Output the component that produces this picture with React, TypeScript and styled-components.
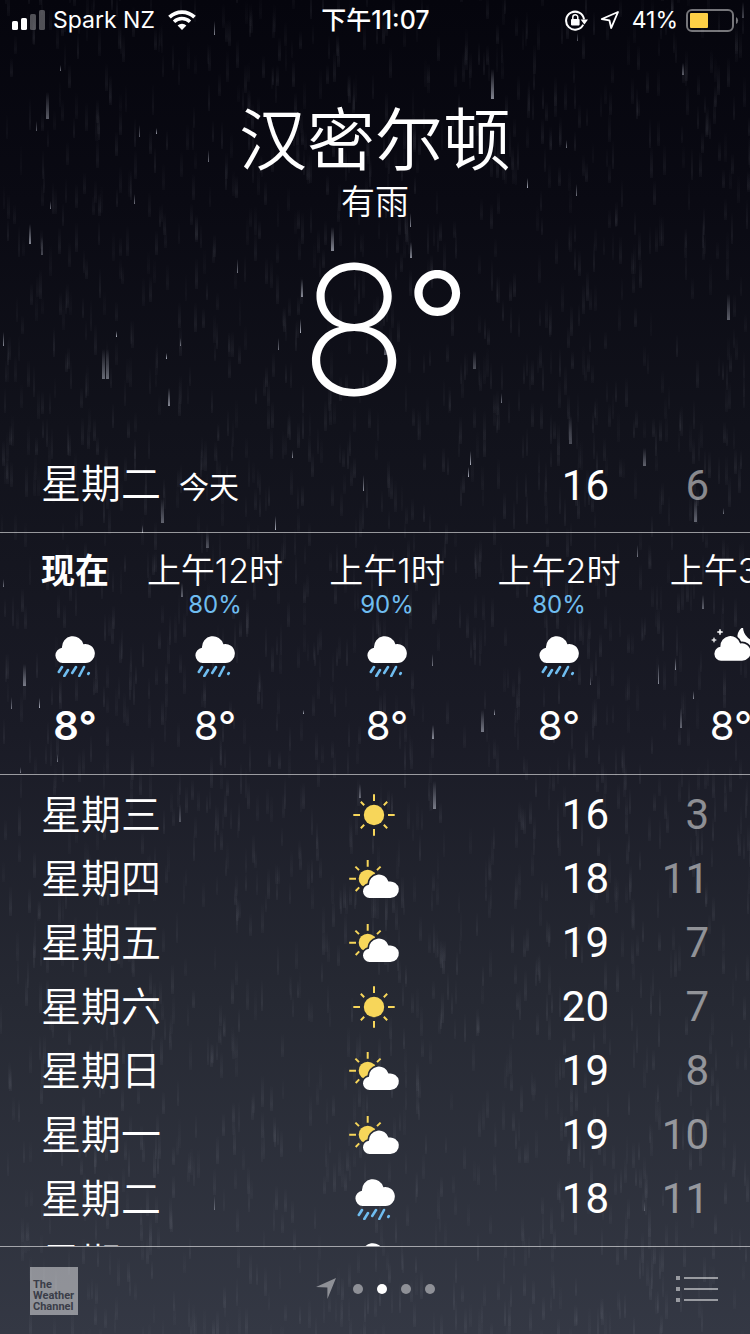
import React from "react";
import styled, { createGlobalStyle } from "styled-components";

const GlobalStyle = createGlobalStyle`
  *, *::before, *::after { box-sizing: border-box; }
  body {
    margin: 0;
    background: #06060e;
    color: #fff;
    font-family: Inter, "Noto Sans CJK SC", sans-serif;
  }
  button { font: inherit; color: inherit; background: none; border: 0; padding: 0; cursor: pointer; }
  ul, ol { list-style: none; margin: 0; padding: 0; }
  h1, h2, p { margin: 0; font-weight: 400; }
`;

const BLUE = "#6fbdf0";
const YELLOW = "#f7d65a";
const RULE = "rgba(255, 255, 255, 0.56)";

/* ---------- layout ---------- */

const Screen = styled.div`
  position: relative;
  display: flex;
  flex-direction: column;
  height: 100vh;
  overflow: hidden;
  isolation: isolate;
  background: linear-gradient(#05050d 0%, #0a0a13 15%, #11121b 32%, #1a1b26 55%, #262933 75%, #343844 100%);
`;

const RainLayer = styled.svg`
  position: absolute;
  inset: 0;
  z-index: -1;
  width: 100%;
  height: 100%;
`;

const StatusBar = styled.div`
  display: grid;
  grid-template-columns: 1fr auto 1fr;
  align-items: center;
  height: 40px;
  padding: 0 11px 0 12px;
  font-size: 23px;
  line-height: 40px;
  white-space: nowrap;
`;

const StatusGroup = styled.div<{ $gap: number; $end?: boolean }>`
  display: flex;
  align-items: center;
  justify-content: ${(p) => (p.$end ? "flex-end" : "flex-start")};
  gap: ${(p) => p.$gap}px;
`;

const StatusTime = styled.span`
  font-size: 25px;
  font-weight: 500;
`;

const Hero = styled.header`
  display: flex;
  flex-direction: column;
  align-items: center;
  padding-top: 60px;
`;

const City = styled.h1`
  font-size: 68px;
  line-height: 80px;
  font-weight: 350;
`;

const Condition = styled.p`
  font-size: 34px;
  line-height: 44px;
  font-weight: 350;
`;

const BigTemperature = styled.p`
  display: flex;
  align-items: flex-start;
  padding-left: 20px;
  font-size: 180px;
  line-height: 212px;
  font-weight: 200;
`;

const BigDegree = styled.span`
  margin-left: -4px;
  font-size: 144px;
  line-height: 200px;
  font-weight: 300;
`;

const DayGrid = styled.div`
  display: grid;
  grid-template-columns: 1fr 52px 1fr;
  align-items: center;
  height: 64px;
  padding: 0 41px;
  font-size: 40px;
`;

const Today = styled.section`
  padding: 16px 0;
  border-bottom: 1px solid ${RULE};
`;

const DayName = styled.div`
  display: flex;
  align-items: baseline;
  gap: 18px;
  line-height: 64px;
  font-weight: 350;
  white-space: nowrap;
`;

const TodayLabel = styled.span`
  font-size: 30px;
  font-weight: 400;
`;

const IconSlot = styled.div`
  display: flex;
  justify-content: center;
`;

const HighLow = styled.div`
  display: flex;
  justify-content: flex-end;
  font-family: Roboto, sans-serif;
  font-size: 42px;
  line-height: 64px;
`;

const High = styled.span``;

const Low = styled.span`
  width: 100px;
  text-align: right;
  color: rgba(255, 255, 255, 0.5);
`;

const Hours = styled.ul`
  display: flex;
  flex-shrink: 0;
  height: 242px;
  padding: 18px 0 0 21px;
  overflow-x: auto;
  scrollbar-width: none;
  border-bottom: 1px solid ${RULE};
`;

const Hour = styled.li<{ $now?: boolean }>`
  flex: 0 0 ${(p) => (p.$now ? 108 : 172)}px;
  display: flex;
  flex-direction: column;
  align-items: center;
  font-weight: ${(p) => (p.$now ? 600 : 400)};
`;

const HourLabel = styled.span<{ $now?: boolean }>`
  font-size: 34px;
  line-height: 40px;
  font-weight: ${(p) => (p.$now ? 600 : 350)};
  white-space: nowrap;
`;

const Chance = styled.span`
  height: 28px;
  font-size: 24px;
  line-height: 28px;
  color: ${BLUE};
`;

const HourIcon = styled.div`
  display: flex;
  align-items: flex-end;
  height: 58px;
`;

const HourTemperature = styled.span`
  margin-top: 25px;
  font-size: 40px;
  line-height: 48px;
`;

const Days = styled.ul`
  flex: 1;
  min-height: 0;
  padding-top: 8px;
  overflow-y: auto;
  scrollbar-width: none;
`;

const Footer = styled.footer`
  display: grid;
  grid-template-columns: 1fr auto 1fr;
  align-items: center;
  flex-shrink: 0;
  height: 88px;
  padding: 0 32px 0 30px;
  border-top: 1px solid ${RULE};
`;

const ChannelLink = styled.a`
  display: flex;
  flex-direction: column;
  justify-content: flex-end;
  width: 48px;
  height: 48px;
  padding: 0 3px 3px;
  background: rgba(255, 255, 255, 0.46);
  color: #3a3d48;
  font: 700 11px/11px Roboto, sans-serif;
  text-decoration: none;
`;

const Pager = styled.nav`
  display: flex;
  align-items: center;
  padding: 0 0 4px 10px;
`;

const PageButton = styled.button<{ $active?: boolean }>`
  display: grid;
  place-items: center;
  width: 24px;
  height: 24px;

  &::before {
    content: "";
    width: 10px;
    height: 10px;
    border-radius: 50%;
    background: ${(p) => (p.$active ? "#fff" : "rgba(255, 255, 255, 0.45)")};
  }
`;

const LocationButton = styled.button`
  display: flex;
  margin-right: 10px;
`;

const ListButton = styled.button`
  display: flex;
  justify-self: end;
  padding-bottom: 4px;
`;

/* ---------- rain ---------- */

type Streak = [x: number, bottom: number, length: number, width: number, opacity: number];

const BRIGHT: Streak[] = [
  [46, 119, 27, 3, 0.4], [36, 131, 10, 1, 0.4], [139, 137, 12, 1, 0.4], [156, 134, 6, 1, 0.7],
  [208, 162, 12, 1, 0.5], [50, 209, 8, 1, 0.5], [134, 204, 10, 1, 0.5], [29, 244, 20, 2, 0.6],
  [41, 255, 18, 2, 0.3], [237, 273, 14, 1, 0.5], [102, 379, 30, 3, 0.45], [106, 379, 30, 3, 0.45],
  [3, 346, 14, 1, 0.6], [116, 337, 6, 1, 0.8], [180, 346, 8, 1, 0.5], [166, 359, 6, 1, 0.8],
  [168, 406, 18, 2, 0.6], [60, 71, 6, 1, 0.5], [331, 251, 24, 3, 0.6], [301, 297, 18, 2, 0.6],
  [410, 227, 14, 1, 0.6], [410, 258, 16, 2, 0.6], [300, 333, 14, 1, 0.8], [384, 355, 12, 3, 0.4],
  [491, 99, 30, 3, 0.6], [473, 369, 18, 3, 0.3], [278, 350, 12, 1, 0.5], [527, 188, 10, 1, 0.8],
  [501, 403, 10, 1, 0.5], [214, 35, 14, 1, 0.6], [742, 18, 16, 2, 0.3], [577, 41, 8, 1, 0.4],
  [161, 523, 24, 3, 0.4], [275, 530, 14, 1, 0.8], [206, 548, 16, 3, 0.3], [142, 533, 8, 1, 0.6],
  [363, 491, 16, 1, 0.6], [292, 458, 8, 1, 0.6], [23, 686, 22, 3, 0.5], [39, 708, 10, 1, 0.8],
  [11, 709, 12, 1, 0.5], [181, 597, 14, 2, 0.4], [303, 714, 4, 1, 0.8], [57, 762, 8, 1, 0.5],
  [20, 773, 6, 1, 0.5], [3, 587, 8, 1, 0.5], [470, 465, 14, 1, 0.8], [468, 477, 10, 1, 0.8],
  [643, 466, 18, 3, 0.4], [694, 522, 24, 3, 0.4], [723, 514, 6, 1, 0.5], [702, 609, 14, 2, 0.4],
  [658, 684, 20, 1, 0.6], [675, 670, 12, 1, 0.6], [481, 732, 22, 3, 0.5], [432, 739, 14, 2, 0.6],
  [494, 715, 6, 1, 0.7], [432, 666, 12, 1, 0.5], [693, 699, 8, 1, 0.6], [680, 728, 20, 2, 0.4],
  [637, 557, 12, 1, 0.5], [590, 685, 8, 1, 0.4], [433, 809, 28, 3, 0.5], [359, 798, 14, 2, 0.4],
  [179, 822, 18, 2, 0.3], [727, 320, 26, 3, 0.4], [569, 444, 28, 3, 0.3], [682, 75, 12, 2, 0.4],
  [566, 148, 8, 1, 0.5], [576, 196, 12, 1, 0.5], [644, 1211, 10, 1, 0.3], [214, 1210, 14, 1, 0.4],
];

const rainStreaks = (count: number): Streak[] => {
  let seed = 20231;
  const next = () => {
    seed = (seed * 16807) % 2147483647;
    return seed / 2147483647;
  };
  return Array.from({ length: count }, () => [
    Math.round(next() * 750),
    Math.round(next() * 1370),
    18 + Math.round(next() * 14),
    next() > 0.4 ? 3 : 2,
    0.025 + next() * 0.045,
  ]);
};

const Streaks = ({ streaks, fill }: { streaks: Streak[]; fill: string }) => (
  <g fill={fill}>
    {streaks.map(([x, bottom, length, width, opacity], i) => (
      <rect key={i} x={`${x / 7.5}%`} y={bottom - length} width={width} height={length} opacity={opacity} />
    ))}
  </g>
);

const FAINT = rainStreaks(2400);

const Rain = () => (
  <RainLayer aria-hidden="true">
    <defs>
      <linearGradient id="drop" x1="0" y1="0" x2="0" y2="1">
        <stop offset="0" stopColor="#d4d8e6" stopOpacity="0" />
        <stop offset="1" stopColor="#d4d8e6" />
      </linearGradient>
      <linearGradient id="faint" x1="0" y1="0" x2="0" y2="1">
        <stop offset="0" stopColor="#d4d8e6" stopOpacity="0" />
        <stop offset="0.75" stopColor="#d4d8e6" />
        <stop offset="1" stopColor="#d4d8e6" stopOpacity="0.5" />
      </linearGradient>
    </defs>
    <Streaks streaks={FAINT} fill="url(#faint)" />
    <Streaks streaks={BRIGHT} fill="url(#drop)" />
  </RainLayer>
);

/* ---------- icons ---------- */

const CLOUD = "M7.6 28A7.7 7.7 0 0 1 7 12.7A10.9 10.9 0 0 1 28.4 9.2A9.5 9.5 0 1 1 30.5 28Z";

const RainIcon = () => (
  <svg width="40" height="42" viewBox="0 0 40 42" role="img" aria-label="雨">
    <path d={CLOUD} fill="#fff" />
    <path d="M7 32L3.8 37M13 35L9.3 41M21 32L17.2 38M29 32L24.3 41M33.8 38L33.2 39" stroke={BLUE} strokeWidth="2.6" strokeLinecap="round" />
  </svg>
);

const SunIcon = () => (
  <svg width="44" height="42" viewBox="-21 -21 44 42" role="img" aria-label="晴">
    <circle r="10.2" fill={YELLOW} />
    <path
      d="M0-20.7V-14M0 20.7V14M-20.7 0H-14M20.7 0H14M-13.2-13.2L-9.8-9.8M13.2-13.2L9.8-9.8M-13.2 13.2L-9.8 9.8M13.2 13.2L9.8 9.8"
      stroke={YELLOW}
      strokeWidth="2"
    />
  </svg>
);

const PartlyIcon = () => {
  const id = React.useId();
  return (
    <svg width="52" height="38" viewBox="0 0 52 38" role="img" aria-label="局部多云">
      <mask id={id}>
        <rect width="50" height="38" fill="#fff" />
        <path d={CLOUD} transform="translate(13.6 13.6) scale(.91 .87)" fill="#000" stroke="#000" strokeWidth="3.6" />
      </mask>
      <circle cx="18.7" cy="18.7" r="9" fill={YELLOW} mask={`url(#${id})`} />
      <path
        d="M18.7 0V6.8M.2 18.7H7M6.4 6.6L10 10.1M31.6 6.6L28 10.1M6.7 31L10.2 27.4"
        stroke={YELLOW}
        strokeWidth="2"
      />
      <path d={CLOUD} transform="translate(13.6 13.6) scale(.91 .87)" fill="#fff" />
    </svg>
  );
};

const NightIcon = () => (
  <svg width="40" height="50" viewBox="0 0 40 50" overflow="visible" role="img" aria-label="夜间多云">
    <mask id="moon" maskUnits="userSpaceOnUse" x="0" y="-4" width="60" height="50">
      <rect y="-4" width="60" height="50" fill="#fff" />
      <path d={CLOUD} transform="translate(3 8) scale(.92)" fill="#000" stroke="#000" strokeWidth="3.6" />
    </mask>
    <path d="M32 0A11 11 0 1 0 47.5 14A14 14 0 0 1 32 0Z" fill="#fff" mask="url(#moon)" />
    <path d={CLOUD} transform="translate(3 8) scale(.92)" fill="#fff" />
    <path
      d="M9 2L9.8 4.3L12 5L9.8 5.8L9 8L8.2 5.8L6 5L8.2 4.3ZM3 10.6L3.6 12.5L5.4 13L3.6 13.6L3 15.4L2.4 13.6L.6 13L2.4 12.5Z"
      fill="#fff"
      stroke="#fff"
      strokeWidth=".5"
    />
  </svg>
);

const SignalIcon = () => (
  <svg width="33" height="20" viewBox="0 0 33 20" fill="#fff" role="img" aria-label="信号">
    <rect y="11" width="6" height="9" rx="1.6" />
    <rect x="9" y="8" width="6" height="12" rx="1.6" />
    <rect x="18" y="4" width="6" height="16" rx="1.6" opacity=".3" />
    <rect x="27" width="6" height="20" rx="1.6" opacity=".3" />
  </svg>
);

const WifiIcon = () => (
  <svg width="28" height="20" viewBox="0 0 28 20" fill="none" role="img" aria-label="无线局域网">
    <path d="M1.5 7.2A18 18 0 0 1 26.5 7.2" stroke="#fff" strokeWidth="3.8" />
    <path d="M6 11.7A11.6 11.6 0 0 1 22 11.7" stroke="#fff" strokeWidth="3.4" />
    <path d="M14 20L9.6 15.6A6.3 6.3 0 0 1 18.4 15.6Z" fill="#fff" />
  </svg>
);

const LockIcon = () => (
  <svg width="23" height="21" viewBox="0 0 23 21" fill="none" role="img" aria-label="方向锁定">
    <path d="M18.2 14.6A9 9 0 1 1 19 9.4" stroke="#fff" strokeWidth="2" />
    <path d="M15.6 9.6H23L19.4 14.4Z" fill="#fff" />
    <rect x="6" y="9" width="8.6" height="6.4" rx=".8" fill="#fff" />
    <path d="M7.8 9.4V7.2A2.5 2.5 0 0 1 12.8 7.2V9.4" stroke="#fff" strokeWidth="1.5" />
  </svg>
);

const LocationIcon = () => (
  <svg width="20" height="20" viewBox="0 0 20 20" fill="none" role="img" aria-label="定位">
    <path d="M18 2L1.8 9L9.4 10.4L11.2 18Z" stroke="#fff" strokeWidth="1.9" strokeLinejoin="round" />
  </svg>
);

const BatteryIcon = () => (
  <svg width="53" height="23" viewBox="0 0 53 23" fill="none" role="img" aria-label="电池">
    <rect x="1" y="1" width="46" height="21" rx="5" stroke="#fff" strokeOpacity=".45" strokeWidth="2" />
    <rect x="4" y="4" width="18" height="15" rx="1" fill="#fccf46" />
    <path d="M50 8A4 4 0 0 1 50 15Z" fill="#fff" fillOpacity=".45" />
  </svg>
);

const ICONS = { rain: RainIcon, sun: SunIcon, partly: PartlyIcon, night: NightIcon };
type IconName = keyof typeof ICONS;

const WeatherIcon = ({ name }: { name: IconName }) => {
  const Icon = ICONS[name];
  return <Icon />;
};

/* ---------- data ---------- */

const HOURS: { label: string; chance?: string; icon: IconName; temp: string; now?: boolean }[] = [
  { label: "现在", icon: "rain", temp: "8°", now: true },
  { label: "上午12时", chance: "80%", icon: "rain", temp: "8°" },
  { label: "上午1时", chance: "90%", icon: "rain", temp: "8°" },
  { label: "上午2时", chance: "80%", icon: "rain", temp: "8°" },
  { label: "上午3时", icon: "night", temp: "8°" },
];

const DAYS: { name: string; icon: IconName; high: number; low: number }[] = [
  { name: "星期三", icon: "sun", high: 16, low: 3 },
  { name: "星期四", icon: "partly", high: 18, low: 11 },
  { name: "星期五", icon: "partly", high: 19, low: 7 },
  { name: "星期六", icon: "sun", high: 20, low: 7 },
  { name: "星期日", icon: "partly", high: 19, low: 8 },
  { name: "星期一", icon: "partly", high: 19, low: 10 },
  { name: "星期二", icon: "rain", high: 18, low: 11 },
  { name: "星期三", icon: "rain", high: 17, low: 9 },
];

export default function App() {
  return (
    <>
      <GlobalStyle />
      <Screen>
        <Rain />
        <StatusBar>
          <StatusGroup $gap={13}>
            <StatusGroup $gap={8}>
              <SignalIcon />
              <span>Spark NZ</span>
            </StatusGroup>
            <WifiIcon />
          </StatusGroup>
          <StatusTime>下午11:07</StatusTime>
          <StatusGroup $gap={12} $end>
            <LockIcon />
            <LocationIcon />
            <StatusGroup $gap={8}>
              <span>41%</span>
              <BatteryIcon />
            </StatusGroup>
          </StatusGroup>
        </StatusBar>

        <Hero>
          <City>汉密尔顿</City>
          <Condition>有雨</Condition>
          <BigTemperature>
            8<BigDegree>°</BigDegree>
          </BigTemperature>
        </Hero>

        <Today>
          <DayGrid>
            <DayName>
              星期二<TodayLabel>今天</TodayLabel>
            </DayName>
            <span />
            <HighLow>
              <High>16</High>
              <Low>6</Low>
            </HighLow>
          </DayGrid>
        </Today>

        <Hours>
          {HOURS.map((hour) => (
            <Hour key={hour.label} $now={hour.now}>
              <HourLabel $now={hour.now}>{hour.label}</HourLabel>
              <Chance>{hour.chance}</Chance>
              <HourIcon>
                <WeatherIcon name={hour.icon} />
              </HourIcon>
              <HourTemperature>{hour.temp}</HourTemperature>
            </Hour>
          ))}
        </Hours>

        <Days>
          {DAYS.map((day, i) => (
            <DayGrid as="li" key={i}>
              <DayName>{day.name}</DayName>
              <IconSlot>
                <WeatherIcon name={day.icon} />
              </IconSlot>
              <HighLow>
                <High>{day.high}</High>
                <Low>{day.low}</Low>
              </HighLow>
            </DayGrid>
          ))}
        </Days>

        <Footer>
          <ChannelLink href="#weather-channel">
            <span>The</span>
            <span>Weather</span>
            <span>Channel</span>
          </ChannelLink>
          <Pager aria-label="城市">
            <LocationButton aria-label="当前位置">
              <svg width="20" height="21" viewBox="0 0 20 21" fill="#fff" fillOpacity=".45">
                <path d="M20 0L0 9L11.4 9.4V21Z" />
              </svg>
            </LocationButton>
            <PageButton aria-label="城市 1" />
            <PageButton aria-label="城市 2" aria-current="page" $active />
            <PageButton aria-label="城市 3" />
            <PageButton aria-label="城市 4" />
          </Pager>
          <ListButton aria-label="城市列表">
            <svg width="42" height="26" viewBox="0 0 42 26" fill="#fff" fillOpacity=".5">
              <path d="M0 0H4V4H0ZM8 1H42V3H8ZM0 11H4V15H0ZM8 12H42V14H8ZM0 22H4V26H0ZM8 23H42V25H8Z" />
            </svg>
          </ListButton>
        </Footer>
      </Screen>
    </>
  );
}
